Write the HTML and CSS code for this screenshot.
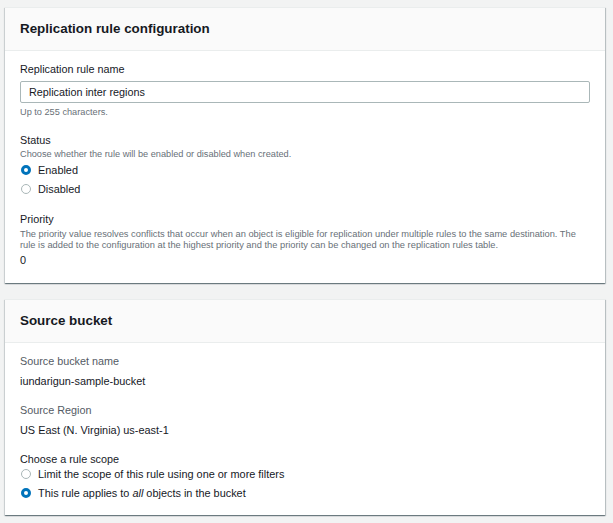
FILE: index.html
```html
<!DOCTYPE html>
<html lang="en">
<head>
<meta charset="utf-8">
<title>Replication rule</title>
<link rel="stylesheet" href="styles.css">
</head>
<body>
<div class="page">
  <section class="panel">
    <header class="panel-header"><h2>Replication rule configuration</h2></header>
    <div class="panel-body">
      <div class="label">Replication rule name</div>
      <div class="input">Replication inter regions</div>
      <div class="hint">Up to 255 characters.</div>

      <div class="label group">Status</div>
      <div class="desc">Choose whether the rule will be enabled or disabled when created.</div>
      <div class="radio-row"><span class="radio checked"></span><span>Enabled</span></div>
      <div class="radio-row"><span class="radio"></span><span>Disabled</span></div>

      <div class="label group-sm">Priority</div>
      <div class="desc desc-multi">The priority value resolves conflicts that occur when an object is eligible for replication under multiple rules to the same destination. The rule is added to the configuration at the highest priority and the priority can be changed on the replication rules table.</div>
      <div class="value value-priority">0</div>
    </div>
  </section>

  <section class="panel">
    <header class="panel-header"><h2>Source bucket</h2></header>
    <div class="panel-body panel-body-2">
      <div class="label muted">Source bucket name</div>
      <div class="value value-src">iundarigun-sample-bucket</div>

      <div class="label muted group-md">Source Region</div>
      <div class="value value-src">US East (N. Virginia) us-east-1</div>

      <div class="label group-md">Choose a rule scope</div>
      <div class="radio-row first"><span class="radio"></span><span>Limit the scope of this rule using one or more filters</span></div>
      <div class="radio-row"><span class="radio checked"></span><span>This rule applies to <i>all</i> objects in the bucket</span></div>
    </div>
  </section>
</div>
</body>
</html>
```

FILE: styles.css
```css
* { box-sizing: border-box; }

html, body {
  margin: 0;
  padding: 0;
  background: #f2f3f3;
  font-family: "Liberation Sans", Arial, sans-serif;
  color: #16191f;
}

.page {
  display: flex;
  flex-direction: column;
  gap: 16px;
  padding: 7px 8px 7px 5px;
}

.panel {
  width: 600px;
  background: #ffffff;
  box-shadow: 0 1px 1px 0 rgba(0, 28, 36, 0.4), 1px 1px 1px 0 rgba(0, 28, 36, 0.18), -1px 1px 1px 0 rgba(0, 28, 36, 0.1);
  border-top: 1px solid #eaeded;
}

.panel-header {
  background: #fafafa;
  border-bottom: 1px solid #eaeded;
  padding: 12px 15px 12px;
}

.panel-header h2 {
  margin: 0;
  font-size: 13.4px;
  line-height: 18px;
  font-weight: bold;
  color: #16191f;
}

.panel-body {
  display: flex;
  flex-direction: column;
  padding: 11px 15px 16px;
}

.panel-body-2 {
  padding-bottom: 13px;
}

.label {
  font-size: 10.8px;
  line-height: 14px;
  color: #16191f;
}

.label.muted {
  color: #545b64;
}

.group { margin-top: 15px; }
.group-sm { margin-top: 14px; }
.group-md { margin-top: 15px; }

.input {
  margin-top: 5px;
  height: 22px;
  border: 1px solid #aab7b8;
  border-radius: 2px;
  padding: 0 8px;
  font-size: 10.8px;
  line-height: 20px;
  color: #16191f;
  background: #fff;
}

.hint {
  margin-top: 3px;
  font-size: 9.2px;
  line-height: 12px;
  color: #687078;
}

.desc {
  margin-top: 1px;
  font-size: 9.2px;
  line-height: 12px;
  color: #687078;
}

.desc-multi {
  margin-top: 3px;
  font-size: 9.3px;
  line-height: 11px;
}

.value {
  margin-top: 5px;
  font-size: 10.9px;
  line-height: 14px;
  color: #16191f;
}

.value-src { margin-top: 6px; }

.value-priority { margin-top: 2px; }

.radio-row {
  display: flex;
  align-items: center;
  gap: 7px;
  height: 19px;
  font-size: 10.9px;
  color: #16191f;
}

.radio-row.first { margin-top: -2px; }

.radio {
  flex: none;
  width: 10px;
  height: 10px;
  margin-left: 1px;
  margin-top: 1px;
  border-radius: 50%;
  border: 1px solid #aab7b8;
  background: #fff;
}

.radio.checked {
  border: 3px solid #0073bb;
}
```
